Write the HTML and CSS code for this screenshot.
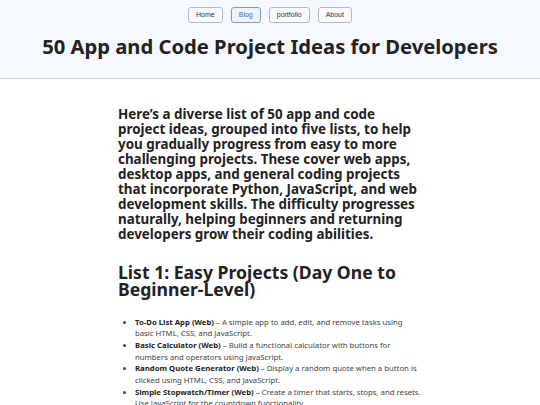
FILE: index.html
```html
<!DOCTYPE html>
<html lang="en">
<head>
<meta charset="utf-8">
<title>50 App and Code Project Ideas for Developers</title>
<link rel="stylesheet" href="styles.css">
</head>
<body>
<header class="site-header">
  <nav class="nav">
    <a class="nav-btn" href="#">Home</a>
    <a class="nav-btn active" href="#">Blog</a>
    <a class="nav-btn" href="#">portfolio</a>
    <a class="nav-btn" href="#">About</a>
  </nav>
  <h1 class="title">50 App and Code Project Ideas for Developers</h1>
</header>
<main class="content">
  <p class="intro">Here’s a diverse list of 50 app and code project ideas, grouped into five lists, to help you gradually progress from easy to more challenging projects. These cover web apps, desktop apps, and general coding projects that incorporate Python, JavaScript, and web development skills. The difficulty progresses naturally, helping beginners and returning developers grow their coding abilities.</p>
  <h2 class="list-title">List 1: Easy Projects (Day One to Beginner-Level)</h2>
  <ul class="projects">
    <li><strong>To-Do List App (Web)</strong> – A simple app to add, edit, and remove tasks using basic HTML, CSS, and JavaScript.</li>
    <li><strong>Basic Calculator (Web)</strong> – Build a functional calculator with buttons for numbers and operators using JavaScript.</li>
    <li><strong>Random Quote Generator (Web)</strong> – Display a random quote when a button is clicked using HTML, CSS, and JavaScript.</li>
    <li><strong>Simple Stopwatch/Timer (Web)</strong> – Create a timer that starts, stops, and resets. Use JavaScript for the countdown functionality.</li>
  </ul>
</main>
</body>
</html>
```
FILE: styles.css
```css
html, body {
  margin: 0;
  padding: 0;
  background: #ffffff;
  color: #222;
  font-family: "Noto Sans", "Open Sans", sans-serif;
}
.site-header {
  background: #f5f8fe;
  border-bottom: 1px solid #c9ced8;
  padding-top: 7px;
  height: 71px;
}
.nav {
  display: flex;
  justify-content: center;
  gap: 8px;
}
.nav-btn {
  display: inline-block;
  box-sizing: border-box;
  height: 16px;
  line-height: 14px;
  padding: 0 7px;
  border: 1px solid #b4b9c4;
  border-radius: 3px;
  background: #fafbfe;
  color: #333;
  font-family: "Liberation Sans", Arial, sans-serif;
  font-size: 7px;
  text-decoration: none;
}
.nav-btn.active {
  color: #3d6bb3;
  border-color: #7d9cc9;
  background: #eef3fc;
}
.title {
  margin: 10px 0 0;
  text-align: center;
  font-size: 20.2px;
  font-weight: 700;
  line-height: 26px;
}
.content {
  width: 304px;
  margin: 0 auto;
  padding-top: 27.5px;
}
.intro {
  margin: 0;
  font-size: 13.4px;
  font-weight: 700;
  line-height: 15px;
}
.list-title {
  margin: 22px 0 0;
  font-size: 17.6px;
  font-weight: 700;
  line-height: 17.7px;
}
.projects {
  margin: 17.6px 0 0;
  padding-left: 17px;
  font-size: 7.75px;
  line-height: 11.7px;
  color: #444;
}
.projects strong {
  font-weight: 700;
  color: #222;
}
```
